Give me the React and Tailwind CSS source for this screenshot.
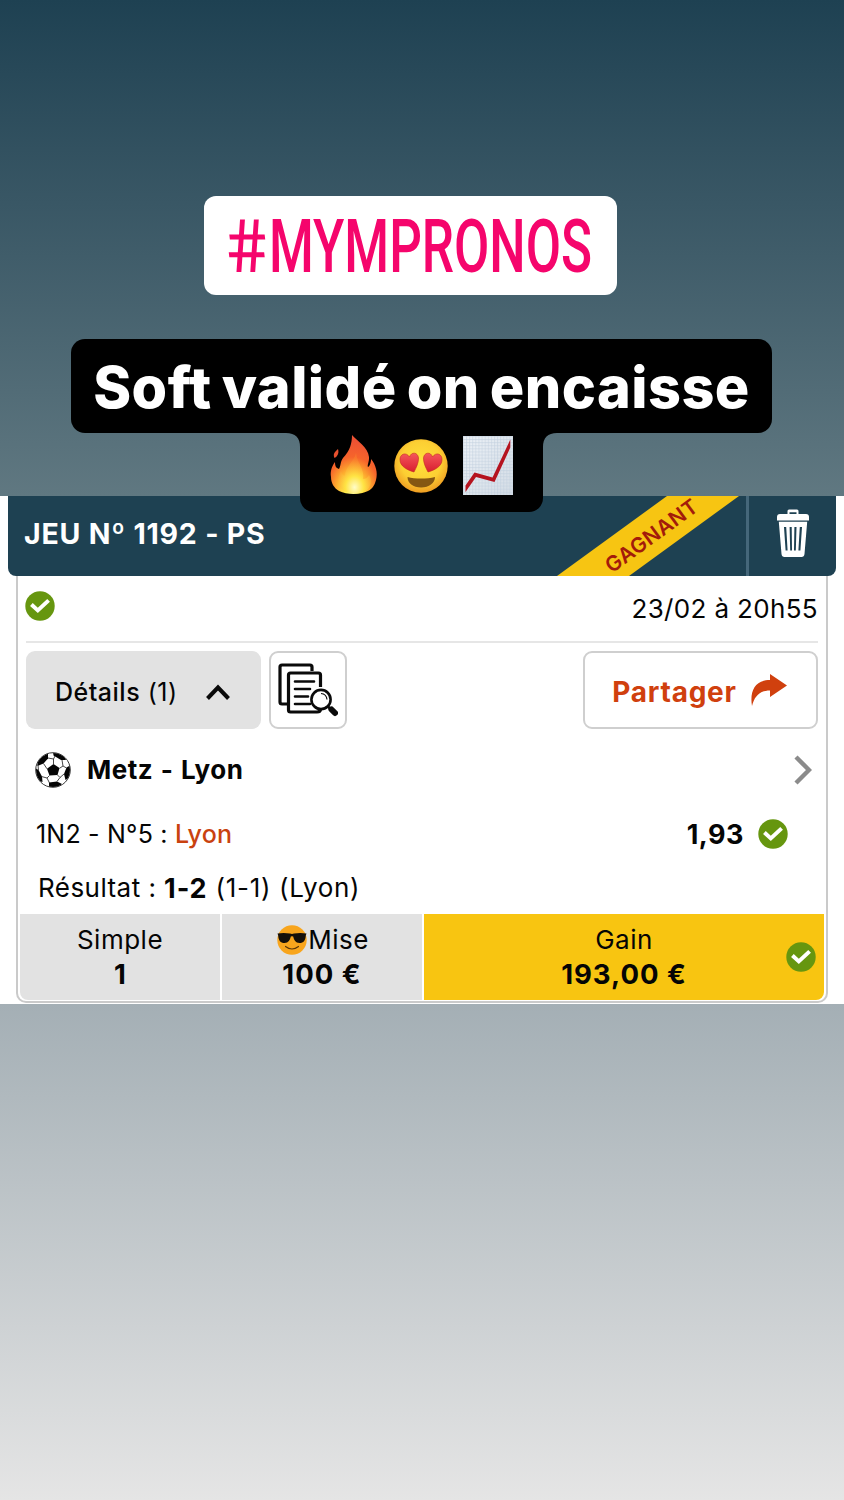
import React from "react";

const Check = ({ className = "" }) => (
  <svg viewBox="0 0 30 30" className={`h-[30px] w-[30px] shrink-0 ${className}`}>
    <circle cx="15" cy="15" r="14.7" fill="#66960f" />
    <path d="M6.4 13.6 L12.8 19.4 L23.6 9.4" fill="none" stroke="#fff" strokeWidth="4" />
  </svg>
);

const Fire = () => (
  <svg viewBox="0 0 48 60" className="h-[60px] w-[48px]">
    <defs>
      <radialGradient id="fire" cx="0.48" cy="0.95" r="0.85">
        <stop offset="0" stopColor="#fffbb0" />
        <stop offset="0.18" stopColor="#fff04c" />
        <stop offset="0.42" stopColor="#fdb02f" />
        <stop offset="0.68" stopColor="#f6642b" />
        <stop offset="1" stopColor="#ee5233" />
      </radialGradient>
      <radialGradient id="flame" cx="0.5" cy="0.85" r="0.7">
        <stop offset="0" stopColor="#fffcc8" />
        <stop offset="0.4" stopColor="#ffe444" />
        <stop offset="1" stopColor="#fb8a2e" stopOpacity="0.4" />
      </radialGradient>
    </defs>
    <path d="M22 0 C27 6 38 12 39 22 C39.300 27 37 30 38 32 C40 31 41 27 41 24 C46 30 48 38 46 45 C44.500 51 42 54 38 56 C30 60 17 60 9 56 C4 53 1 48 1 42 C0 36 2 31 5 27 C5 31 6 33 9 34 C11 31 10 27 13 23 C20 16 22 8 22 0 Z" fill="url(#fire)" />
    <path d="M8 14 C9.500 19 6.500 22 4.500 23 C2.500 19 5 16.500 8 14 Z" fill="#e9512f" />
    <path d="M26 18 C24 27 15 31 15 41 C12 40 11 37 11 36 C6 44 8 54 16 57 C23 59 31 59 36 56 C42 51 42 44 39 40 C37 43 36 44 33 44 C35 34 27 28 26 18 Z" fill="url(#flame)" />
  </svg>
);

const HeartEyes = () => (
  <svg viewBox="0 0 54 54" className="h-[54px] w-[54px]">
    <defs>
      <radialGradient id="face" cx="0.5" cy="0.42" r="0.58">
        <stop offset="0" stopColor="#ffe03c" />
        <stop offset="0.65" stopColor="#fccf33" />
        <stop offset="1" stopColor="#ef9d22" />
      </radialGradient>
      <linearGradient id="heart" x1="0" y1="0" x2="0" y2="1">
        <stop offset="0" stopColor="#f5565a" />
        <stop offset="1" stopColor="#d81e30" />
      </linearGradient>
    </defs>
    <circle cx="27" cy="27" r="26.700" fill="url(#face)" />
    <g fill="url(#heart)" stroke="#c22b22" strokeWidth="0.6">
      <path d="M20 33 C13 31 6 27 6 21 C5.500 15 12 12.500 15.500 18 C17 12.500 24 13 24.500 19 C24.700 24 22 29 20 33 Z" />
      <path d="M34 33 C41 31 48 27 48 21 C48.500 15 42 12.500 38.500 18 C37 12.500 30 13 29.500 19 C29.300 24 32 29 34 33 Z" />
    </g>
    <path d="M13.500 38 C21 40 33 40 41 38 C41 44 35 48.500 27.200 48.500 C19 48.500 13.500 44 13.500 38 Z" fill="#855712" />
  </svg>
);

const ChartUp = () => (
  <svg viewBox="0 0 50 59" className="h-[59px] w-[50px]">
    <defs>
      <linearGradient id="paper" x1="0" y1="0" x2="1" y2="1">
        <stop offset="0" stopColor="#edf2f7" />
        <stop offset="1" stopColor="#d3dce5" />
      </linearGradient>
      <pattern id="grid" width="3.100" height="3.100" patternUnits="userSpaceOnUse">
        <path d="M0 0.500 H3.100 M0.500 0 V3.100" stroke="#c3d1de" strokeWidth="0.5" />
      </pattern>
    </defs>
    <rect width="50" height="59" fill="url(#paper)" />
    <rect width="50" height="59" fill="url(#grid)" />
    <path d="M2.500 49.500 L11.500 36.500 L29.500 41.500 L47.300 3.500 V11.500 L31.500 46 L13 41 L2.500 56 Z" fill="#b5131f" />
  </svg>
);

const Cool = () => (
  <svg viewBox="0 0 30 30" className="h-[30px] w-[30px]">
    <circle cx="15" cy="15" r="14.700" fill="#f8a51d" />
    <path d="M0.500 8.500 Q7 7.300 13 8.600 Q15 9.200 17 8.600 Q23 7.300 29.500 8.500 L28.800 10.500 C28.500 15.500 26.500 18 22.500 18 C18.500 18 17 15 16.200 11.500 Q15 10.800 13.800 11.500 C13 15 11.500 18 7.500 18 C3.500 18 1.500 15.500 1.200 10.500 Z" fill="#15100a" />
    <path d="M8.500 21.500 Q15 26.500 21.500 21.500" fill="none" stroke="#5b3608" strokeWidth="1.200" strokeLinecap="round" />
  </svg>
);

const Trash = () => (
  <svg viewBox="0 0 32 48" className="h-[48px] w-[32px]" fill="#fff">
    <path d="M10.500 6 V2 Q10.500 0.500 12 0.500 H20 Q21.500 0.500 21.500 2 V6 H19.500 V3.200 H12.500 V6 Z" />
    <path d="M3 5 H29 Q32 5 32 8 V11.500 H0 V8 Q0 5 3 5 Z" />
    <path fillRule="evenodd" d="M1.800 12.800 H30.200 L27.500 45 Q27.200 48 24.500 48 H7.500 Q4.800 48 4.500 45 Z M7 18 L8.600 41.500 H10.600 L9.200 18 Z M12.600 18 L13.200 41.500 H15 L14.700 18 Z M17.400 18 L17 41.500 H18.800 L19.500 18 Z M22.800 18 L21.400 41.500 H23.400 L25 18 Z" />
  </svg>
);

const Docs = () => (
  <svg viewBox="0 0 60 54" className="h-[54px] w-[60px]" fill="none" stroke="#0a0a0a">
    <path d="M34 8 V4 Q34 2 32 2 H4 Q2 2 2 4 V39 Q2 41 4 41 H9" strokeWidth="3.200" />
    <path d="M42.500 24 V12 Q42.500 10 40.500 10 H12.500 Q10.500 10 10.500 12 V47 Q10.500 49 12.500 49 H39 Q42.500 49 42.500 46" strokeWidth="3.200" />
    <path d="M17 18.500 H36 M17 26 H32 M17 33.500 H30 M17 41 H32" strokeWidth="2.600" strokeLinecap="round" />
    <circle cx="43" cy="36.500" r="9.600" fill="#fff" strokeWidth="2.600" />
    <path d="M43 30.500 Q48.500 31 49 36.500" strokeWidth="1.200" />
    <path d="M50 43.500 L53 46.500" strokeWidth="2.600" />
    <path d="M53.500 46.500 L57 50" strokeWidth="6" strokeLinecap="round" />
  </svg>
);

const Ball = () => (
  <svg viewBox="0 0 36 36" className="h-[36px] w-[36px]">
    <defs>
      <clipPath id="ball"><circle cx="18" cy="18" r="17" /></clipPath>
    </defs>
    <circle cx="18" cy="18" r="17" fill="#fff" />
    <g clipPath="url(#ball)" fill="#050505">
      <path d="M18.500 12 L24.500 16 L22.500 23 L14.500 23.500 L12 16.800 Z" />
      <path d="M13 1 L2 8 L2.500 14 L8.500 11.500 L13 6.500 Z" />
      <path d="M18 0 L18.500 3.500 L26 8 L31 8 L28 0 Z" />
      <path d="M36 13 L31.500 15.500 L29 22 L30.500 28 L36 25 Z" />
      <path d="M14 30.500 L22 29.500 L27 32 L22 36 H14 Z" />
      <path d="M0 16 L3.500 18 L7 24.500 L7.500 30 L0 28 Z" />
      <path d="M18.500 12.500 L18.500 7 L13 6 M18.500 7 L20 4 M24.500 16.300 L28 14 L31.500 16 M28 14 L27 8 M22.500 23 L25 25.500 L22 29.500 M25 25.500 L29 22 M14.500 23.500 L12 26 L14.500 31 M12 26 L6.500 24.500 M12 16.800 L8.500 11.500 M3 13 L3.500 18.500" stroke="#333" strokeWidth="0.900" fill="none" />
    </g>
    <circle cx="18" cy="18" r="17.300" fill="none" stroke="#222" strokeWidth="0.900" />
  </svg>
);

export default function App() {
  return (
    <div className="flex h-[1500px] w-[844px] flex-col overflow-hidden bg-white font-['Inter','Liberation_Sans',sans-serif] text-[26px] leading-none text-[#050505]">
      <section className="relative z-10 flex h-[496px] shrink-0 flex-col items-center bg-linear-to-b from-[#1e4152] to-[#607881] pr-px pt-[196px]">
        <div className="mr-[22px] flex h-[99px] w-[413px] shrink-0 items-center rounded-[12px] bg-white pl-[20px] pt-[2px] font-['Roboto',sans-serif] text-[74px] font-medium text-[#f5056c]">
          <span className="inline-block w-[45px] origin-left scale-x-[0.94] skew-x-[7deg] font-normal">#</span>
          <span className="inline-block origin-left scale-x-[0.692] whitespace-nowrap">MYMPRONOS</span>
        </div>
        <div className="mt-[44px] flex h-[94px] w-[701px] shrink-0 items-center justify-center rounded-[14px] bg-black pt-[3px]">
          <span className="whitespace-nowrap text-[57.5px] font-extrabold tracking-[0.45px] text-white [word-spacing:-3px]">Soft validé on encaisse</span>
        </div>
        <div className="flex shrink-0 items-start">
          <svg viewBox="0 0 14 14" className="h-[14px] w-[14px]"><path d="M0 0 H14 V14 Q14 0 0 0 Z" /></svg>
          <div className="mt-[-1px] flex h-[80px] w-[243px] items-center rounded-b-[14px] bg-black pb-[14px] pl-[30px]">
            <Fire />
            <span className="ml-[16px] mt-px flex"><HeartEyes /></span>
            <span className="ml-[15px] flex"><ChartUp /></span>
          </div>
          <svg viewBox="0 0 14 14" className="h-[14px] w-[14px]"><path d="M14 0 H0 V14 Q0 0 14 0 Z" /></svg>
        </div>
      </section>

      <main className="flex h-[508px] shrink-0 flex-col items-start px-[8px]">
        <header className="flex h-[80px] w-[828px] shrink-0 overflow-hidden rounded-b-[8px] bg-[#1e4152] text-white">
          <h1 className="flex w-[549px] items-center pb-[4px] pl-[16px] text-[28.5px] font-bold tracking-[0.8px]">JEU Nº 1192 - PS</h1>
          <div className="flex h-[80px] w-[183px] items-center justify-center bg-[#f7c512] [clip-path:polygon(0_100%,110px_0,182px_0,72px_100%)]">
            <span className="-translate-y-px translate-x-[3px] -rotate-36 text-[21px] font-semibold tracking-[0.4px] text-[#a31b0a]">GAGNANT</span>
          </div>
          <div className="ml-[6px] w-[3px] bg-[#45677a]" />
          <div className="flex flex-1 items-center justify-center pb-[6px]"><Trash /></div>
        </header>

        <article className="ml-[8px] flex h-[427px] w-[812px] flex-col rounded-b-[10px] border-x-2 border-b-2 border-[#cacaca]">
          <div className="mx-[8px] flex h-[67px] shrink-0 justify-between border-b-2 border-[#e6e6e6]">
            <Check className="mt-[15px] -ml-px" />
            <span className="mt-[20px] whitespace-nowrap tracking-[0.35px]">23/02 à 20h55</span>
          </div>
          <div className="mx-[8px] mt-[8px] flex h-[78px] shrink-0">
            <button className="flex w-[235px] items-center rounded-[9px] bg-[#e2e2e2] pl-[29px] pt-[4px] text-[25px]">
              <span className="w-[122px] whitespace-nowrap tracking-[0.5px]"><span className="font-medium">Détails</span> (1)</span>
              <svg viewBox="0 0 24 16" className="ml-[29px] h-[16px] w-[24px]"><path d="M1.500 14.500 L12 3.500 L22.500 14.500" fill="none" stroke="#0a0a0a" strokeWidth="4" /></svg>
            </button>
            <button className="ml-[8px] flex w-[78px] items-center justify-center rounded-[9px] border-2 border-[#cfcfcf]"><Docs /></button>
            <button className="ml-auto flex w-[235px] items-center rounded-[9px] border-2 border-[#cfcfcf] pl-[27px] pt-[3px] text-[28px] font-bold text-[#d0400e]">
              <span className="w-[125px] tracking-[0.75px]">Partager</span>
              <svg viewBox="0 0 36 32" className="ml-[14px] mb-[4px] h-[32px] w-[36px]"><path d="M19 0 L36 11.500 L19 23 V16.500 C9 16.500 3.500 22 1 32 C-1.500 17 4 6 19 6 Z" fill="#d0400e" /></svg>
            </button>
          </div>
          <div className="flex h-[82px] shrink-0 items-center pl-[17px] pr-[14px] font-bold">
            <Ball />
            <span className="ml-[16px] tracking-[0.5px] [word-spacing:1px]">Metz - Lyon</span>
            <svg viewBox="0 0 18 30" className="ml-auto h-[30px] w-[18px]"><path d="M2 2 L15 15 L2 28" fill="none" stroke="#8b8b8b" strokeWidth="4.400" /></svg>
          </div>
          <div className="flex h-[46px] shrink-0 items-center pl-[18px] pr-[38px] text-[25px]">
            <span className="whitespace-nowrap tracking-[0.2px]">1N2 - N°5 : <span className="font-medium text-[#c9420f]">Lyon</span></span>
            <span className="ml-auto mr-[14px] text-[27px] font-bold tracking-[0.5px]">1,93</span>
            <Check />
          </div>
          <div className="flex h-[57px] shrink-0 items-center whitespace-pre pl-[20px] pt-[5px] tracking-[0.45px]">Résultat : <b className="text-[27px] font-bold tracking-[0.9px]">1-2</b><span className="tracking-[0.7px]"> (1-1) (Lyon)</span></div>
          <div className="mx-[2px] flex h-[86px] shrink-0 gap-[2px] overflow-hidden rounded-b-[8px] text-center">
            <div className="flex w-[200px] flex-col items-center bg-[#e2e2e2] pt-[9px] leading-[34px]">
              <span className="tracking-[0.5px]">Simple</span>
              <b className="text-[27.5px] font-bold leading-[35px]">1</b>
            </div>
            <div className="flex w-[200px] flex-col items-center bg-[#e2e2e2] pt-[9px] leading-[34px]">
              <span className="ml-[2px] flex items-center"><Cool /><span className="ml-px tracking-[0.5px]">Mise</span></span>
              <b className="text-[27.5px] font-bold leading-[35px] tracking-[1px]">100 €</b>
            </div>
            <div className="relative flex flex-1 flex-col items-center bg-[#f8c511] pt-[9px] leading-[34px]">
              <span className="tracking-[0.5px]">Gain</span>
              <b className="text-[27.5px] font-bold leading-[35px] tracking-[1px]">193,00 €</b>
              <Check className="absolute right-[8px] top-[28px]" />
            </div>
          </div>
        </article>
      </main>

      <footer className="h-[496px] shrink-0 bg-linear-to-b from-[#a4afb5] to-[#e5e5e5]" />
    </div>
  );
}
